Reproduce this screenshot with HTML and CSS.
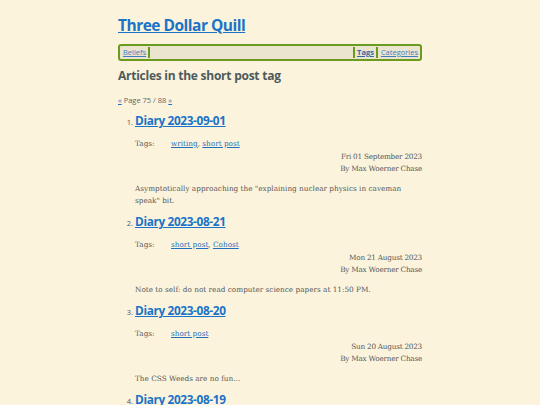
FILE: index.html
```html
<!DOCTYPE html>
<html>
<head>
<meta charset="utf-8">
<link rel="stylesheet" href="styles.css">
</head>
<body>
<div class="page">
  <header class="site-header">
    <h1 class="site-title"><a href="#">Three Dollar Quill</a></h1>
    <nav class="nav">
      <a class="nav-link" href="#">Beliefs</a>
      <span class="nav-fill"></span>
      <a class="nav-link nav-current" href="#">Tags</a>
      <a class="nav-link" href="#">Categories</a>
    </nav>
  </header>
  <main>
    <h2 class="page-heading">Articles in the short post tag</h2>
    <p class="pager"><a href="#">«</a> Page 75 / 88 <a href="#">»</a></p>
    <ol class="articles">
      <li class="article">
        <h3 class="article-title"><a href="#">Diary 2023-09-01</a></h3>
        <div class="tags"><span class="tags-label">Tags:</span><span><a href="#">writing</a>, <a href="#">short post</a></span></div>
        <div class="meta"><div>Fri 01 September 2023</div><div>By Max Woerner Chase</div></div>
        <p class="summary">Asymptotically approaching the "explaining nuclear physics in caveman speak" bit.</p>
      </li>
      <li class="article">
        <h3 class="article-title"><a href="#">Diary 2023-08-21</a></h3>
        <div class="tags"><span class="tags-label">Tags:</span><span><a href="#">short post</a>, <a href="#">Cohost</a></span></div>
        <div class="meta"><div>Mon 21 August 2023</div><div>By Max Woerner Chase</div></div>
        <p class="summary">Note to self: do not read computer science papers at 11:50 PM.</p>
      </li>
      <li class="article">
        <h3 class="article-title"><a href="#">Diary 2023-08-20</a></h3>
        <div class="tags"><span class="tags-label">Tags:</span><span><a href="#">short post</a></span></div>
        <div class="meta"><div>Sun 20 August 2023</div><div>By Max Woerner Chase</div></div>
        <p class="summary">The CSS Weeds are no fun...</p>
      </li>
      <li class="article">
        <h3 class="article-title"><a href="#">Diary 2023-08-19</a></h3>
        <div class="tags"><span class="tags-label">Tags:</span><span><a href="#">short post</a></span></div>
        <div class="meta"><div>Sat 19 August 2023</div><div>By Max Woerner Chase</div></div>
        <p class="summary">More diary.</p>
      </li>
    </ol>
  </main>
</div>
</body>
</html>
```
FILE: styles.css
```css
html, body {
  margin: 0;
  padding: 0;
  background: #fcf3dc;
}
body {
  font-family: "DejaVu Serif", serif;
  font-size: 7.3px;
  color: #555858;
}
a {
  color: #1f6fbd;
}
.page {
  width: 304px;
  margin: 0 auto;
  padding-top: 13px;
}
.site-title {
  font-family: "Open Sans", "Noto Sans", sans-serif;
  font-size: 15.5px;
  font-weight: 700;
  margin: 0;
  line-height: 24px;
  letter-spacing: -0.5px;
}
.site-title a {
  color: #1a73c8;
}
.nav {
  margin-top: 7px;
  display: flex;
  align-items: stretch;
  height: 13px;
  border: 2px solid #6b9b1e;
  border-radius: 3px;
  background: #ebe4cf;
  font-family: "Open Sans", "Noto Sans", sans-serif;
  font-size: 7.5px;
  line-height: 13px;
}
.nav-link {
  color: #3f7fc0;
  padding: 0 2px 0 3px;
}
.nav-fill {
  flex: 1;
  border-left: 2px solid #6b9b1e;
  border-right: 2px solid #6b9b1e;
  margin: 1px 0;
}
.nav-current {
  font-weight: 700;
  color: #2f6aa8;
  border-right: 2px solid #6b9b1e;
  margin: 1px 0;
  line-height: 11px;
  padding: 0 2px;
}
.page-heading {
  font-family: "Open Sans", "Noto Sans", sans-serif;
  font-size: 12px;
  font-weight: 700;
  color: #4d5b5d;
  margin: 6px 0 0;
  line-height: 18px;
  letter-spacing: -0.25px;
}
.pager {
  font-family: "Open Sans", "Noto Sans", sans-serif;
  font-size: 7.5px;
  margin: 10px 0 0;
  line-height: 10px;
  color: #666;
}
.articles {
  margin: 6px 0 0;
  padding-left: 17px;
}
.article {
  margin-bottom: 5px;
}
.article::marker {
  font-family: "Open Sans", "Noto Sans", sans-serif;
  font-size: 7.5px;
  color: #555;
}
.article-title {
  font-family: "Open Sans", "Noto Sans", sans-serif;
  font-size: 11.8px;
  font-weight: 700;
  margin: 0;
  line-height: 18px;
  letter-spacing: -0.35px;
}
.article-title a {
  color: #1a73c8;
}
.tags {
  display: flex;
  margin-top: 9px;
  line-height: 12px;
}
.tags-label {
  width: 36px;
}
.meta {
  margin-top: 1px;
  text-align: right;
  line-height: 12px;
  letter-spacing: -0.25px;
}
.summary {
  margin: 8px 0 0;
  line-height: 12px;
}
```
